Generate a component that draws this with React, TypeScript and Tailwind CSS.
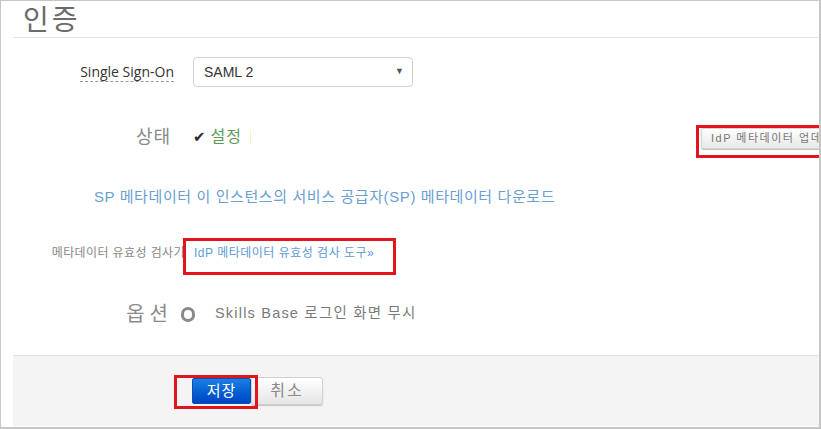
import React from "react";

const KR = "font-['Liberation_Sans','Noto_Sans_CJK_KR',sans-serif]";

export default function App() {
  return (
    <div
      className={`relative w-[821px] h-[429px] overflow-hidden bg-white border-l border-t border-r-2 border-b-2 border-[#c6c6c6] ${KR}`}
    >
      <div className="flex flex-col h-full pl-[12px]">
        {/* Header */}
        <div className="h-[37px] border-b border-[#e2e2e2] flex items-end pl-[10px] shrink-0">
          <span className="text-[28px] leading-[36px] text-[#6b6b6b] tracking-[3px] translate-y-[2px]">인증</span>
        </div>

        {/* Row 1 */}
        <div className="h-[68px] flex items-center shrink-0">
          <div className="w-[161px] shrink-0 flex justify-end">
            <span className="font-['Open_Sans',sans-serif] text-[14px] text-[#333] leading-[18px] border-b border-dashed border-[#999] whitespace-nowrap">
              Single Sign-On
            </span>
          </div>
          <div className="ml-[19px] shrink-0 w-[220px] h-[30px] border border-[#cfcfcf] rounded-[4px] flex items-center pl-[10px] pr-[8px]">
            <span className="text-[14px] text-[#333]">SAML 2</span>
            <span className="ml-auto text-[9px] text-[#555]">▼</span>
          </div>
        </div>

        {/* Row 2 */}
        <div className="h-[62px] flex items-center shrink-0">
          <div className="w-[688px] shrink-0 flex items-center">
            <div className="w-[158px] shrink-0 flex justify-end">
              <span className="text-[18px] text-[#8a8a8a] tracking-[1px] whitespace-nowrap">상태</span>
            </div>
            <span className="ml-[22px] shrink-0 text-[15px] leading-none text-[#2b2b2b] font-['DejaVu_Sans',sans-serif]">✔</span>
            <span className="ml-[5px] shrink-0 text-[16px] text-[#5b9a5b] tracking-[1px] whitespace-nowrap">설정</span>
            <span className="ml-[8px] shrink-0 w-px h-[14px] bg-[#fbf3c0]" />
          </div>
          <div className="shrink-0 h-[21px] mt-[2px] pl-[9px] pr-[4px] flex items-center whitespace-nowrap border border-[#d4d4d4] rounded-[2px] bg-gradient-to-b from-[#fdfdfd] to-[#e9e9e9] shadow-[0_1px_1px_rgba(0,0,0,0.25)]">
            <span className="text-[11px] text-[#777] tracking-[1.5px]">IdP 메타데이터 업데이트</span>
          </div>
        </div>

        {/* Row 3 */}
        <div className="h-[58px] flex items-center shrink-0 pl-[81px]">
          <span className="text-[15px] text-[#6a9fd2] whitespace-nowrap tracking-[0.6px]">
            SP 메타데이터 이 인스턴스의 서비스 공급자(SP) 메타데이터 다운로드
          </span>
        </div>

        {/* Row 4 */}
        <div className="h-[54px] flex items-center shrink-0">
          <div className="w-[172px] shrink-0 flex justify-end">
            <span className="text-[12px] text-[#888] whitespace-nowrap tracking-[0.4px]">메타데이터 유효성 검사기</span>
          </div>
          <span className="ml-[9px] shrink-0 text-[12px] text-[#5b9bd5] whitespace-nowrap tracking-[0.5px]">
            IdP 메타데이터 유효성 검사 도구»
          </span>
        </div>

        {/* Row 5 */}
        <div className="h-[68px] flex items-center shrink-0">
          <div className="w-[160px] shrink-0 flex justify-end">
            <span className="text-[20px] text-[#8a8a8a] tracking-[5px] whitespace-nowrap">옵션</span>
          </div>
          <span className="ml-[8px] shrink-0 w-[14px] h-[15px] rounded-full border-[3px] border-[#8a8a8a]" />
          <span className="ml-[20px] shrink-0 text-[14.5px] text-[#7a7a7a] whitespace-nowrap tracking-[1.2px]">
            Skills Base 로그인 화면 무시
          </span>
        </div>

        <div className="h-[7px] shrink-0" />

        {/* Footer */}
        <div className="h-[71px] shrink-0 border-t border-[#e2e2e2] bg-[#f4f4f4] flex items-center pl-[179px]">
          <div className="w-[59px] h-[26px] shrink-0 flex items-center justify-center rounded-[2px] bg-gradient-to-b from-[#1c7fe3] to-[#0044c4] border border-[#0a4fb8]">
            <span className="text-[15px] text-white tracking-[1px]">저장</span>
          </div>
          <div className="w-[72px] h-[28px] shrink-0 flex items-center justify-center rounded-[3px] border border-[#d0d0d0] bg-gradient-to-b from-[#ffffff] to-[#e6e6e6] shadow-[0_1px_1px_rgba(0,0,0,0.2)]">
            <span className="text-[16px] text-[#8a8a8a] tracking-[2px]">취소</span>
          </div>
        </div>
      </div>

      {/* Annotation boxes */}
      <div className="absolute left-[695px] top-[124px] w-[140px] h-[33px] border-[3px] border-[#e3141e]" />
      <div className="absolute left-[182px] top-[237px] w-[213px] h-[37px] border-[3px] border-[#e3141e]" />
      <div className="absolute left-[173px] top-[374px] w-[84px] h-[34px] border-[3px] border-[#e3141e]" />
    </div>
  );
}
